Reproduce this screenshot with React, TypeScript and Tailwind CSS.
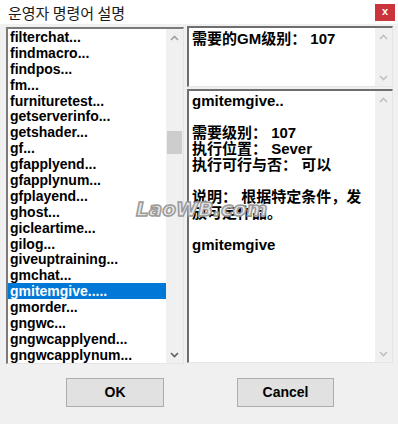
import React from "react";

const items = [
  "filterchat...",
  "findmacro...",
  "findpos...",
  "fm...",
  "furnituretest...",
  "getserverinfo...",
  "getshader...",
  "gf...",
  "gfapplyend...",
  "gfapplynum...",
  "gfplayend...",
  "ghost...",
  "gicleartime...",
  "gilog...",
  "giveuptraining...",
  "gmchat...",
  "gmitemgive.....",
  "gmorder...",
  "gngwc...",
  "gngwcapplyend...",
  "gngwcapplynum...",
];

const Up = ({ c }: { c: string }) => (
  <svg width="9" height="6" viewBox="0 0 9 6">
    <path d="M1 5 L4.5 1.5 L8 5" fill="none" stroke={c} strokeWidth="1.6" />
  </svg>
);
const Down = ({ c }: { c: string }) => (
  <svg width="9" height="6" viewBox="0 0 9 6">
    <path d="M1 1 L4.5 4.5 L8 1" fill="none" stroke={c} strokeWidth="1.6" />
  </svg>
);

const font = { fontFamily: '"Liberation Sans", "Noto Sans CJK SC", sans-serif' };

export default function App() {
  return (
    <div
      className="relative w-[398px] h-[424px] bg-[#f0f0f0] overflow-hidden text-black"
      style={font}
    >
      {/* Title bar */}
      <div className="h-[24px] bg-white flex items-center justify-between pl-[8px] pr-[3px]">
        <span
          className="text-[15px] text-[#1a1a1a] leading-none"
          style={{ fontFamily: '"Noto Sans CJK KR", sans-serif' }}
        >
          운영자 명령어 설명
        </span>
        <div className="w-[20px] h-[17px] bg-[#c9353a] flex items-center justify-center text-white text-[11px] font-bold leading-none pb-[2px]">
          x
        </div>
      </div>

      {/* Body */}
      <div className="flex flex-row pl-[6px] pt-[2px]">
        {/* List box */}
        <div className="mt-[1px] w-[178px] h-[337px] border-l-2 border-t-2 border-[#7a7a7a] border-r border-b border-r-[#e5e5e5] border-b-[#e5e5e5] bg-white flex flex-row">
          <div className="flex-1 flex flex-col overflow-hidden">
            {items.map((it, i) => (
              <div
                key={i}
                className={
                  "h-[15.9px] leading-[16px] pl-[2px] text-[14px] font-bold whitespace-nowrap shrink-0 " +
                  (it === "gmitemgive....." ? "bg-[#0078d7] text-white" : "text-black")
                }
              >
                {it}
              </div>
            ))}
          </div>
          <div className="w-[17px] bg-[#f0f0f0] flex flex-col items-center">
            <div className="h-[17px] flex items-center justify-center">
              <Up c="#a0a0a0" />
            </div>
            <div className="mt-[85px] w-[15px] h-[23px] bg-[#cdcdcd]" />
            <div className="flex-1" />
            <div className="h-[17px] flex items-center justify-center">
              <Down c="#606060" />
            </div>
          </div>
        </div>

        {/* Right column */}
        <div className="ml-[3px] w-[206px] flex flex-col gap-[2px]">
          <div className="h-[61px] border-l-2 border-t-2 border-[#6e6e6e] border-r border-b border-r-[#e5e5e5] border-b-[#e5e5e5] bg-white flex flex-row">
            <div className="flex-1 pl-[3px] pt-[3px] text-[15px] font-bold leading-[16px] whitespace-nowrap">
              需要的GM级别： 107
            </div>
            <div className="w-[17px] bg-[#f0f0f0] flex flex-col items-center justify-between">
              <div className="h-[17px] flex items-center justify-center">
                <Up c="#c0c0c0" />
              </div>
              <div className="h-[17px] flex items-center justify-center">
                <Down c="#c0c0c0" />
              </div>
            </div>
          </div>
          <div className="h-[274px] border-l-2 border-t-2 border-[#6e6e6e] border-r border-b border-r-[#e5e5e5] border-b-[#e5e5e5] bg-white flex flex-row">
            <div className="flex-1 pl-[3px] pt-[2px] text-[15px] font-bold leading-[16px] whitespace-nowrap flex flex-col">
              <div className="h-[16px]">gmitemgive..</div>
              <div className="h-[16px]" />
              <div className="h-[16px]">需要级别： 107</div>
              <div className="h-[16px]">执行位置： Sever</div>
              <div className="h-[16px]">执行可行与否： 可以</div>
              <div className="h-[16px]" />
              <div className="h-[16px]">说明： 根据特定条件，发</div>
              <div className="h-[16px]">放可定作品。</div>
              <div className="h-[16px]" />
              <div className="h-[16px]">gmitemgive</div>
            </div>
            <div className="w-[17px] bg-[#f0f0f0] flex flex-col items-center justify-between">
              <div className="h-[17px] flex items-center justify-center">
                <Up c="#c0c0c0" />
              </div>
              <div className="h-[17px] flex items-center justify-center">
                <Down c="#c0c0c0" />
              </div>
            </div>
          </div>
        </div>
      </div>

      {/* Buttons */}
      <div className="flex flex-row pl-[66px] gap-[73px] mt-[14px]">
        <div className="w-[98px] h-[29px] bg-[#e1e1e1] border border-[#adadad] flex items-center justify-center text-[14px] font-bold">
          OK
        </div>
        <div className="w-[97px] h-[29px] bg-[#e1e1e1] border border-[#adadad] flex items-center justify-center text-[14px] font-bold">
          Cancel
        </div>
      </div>

      {/* Watermark */}
      <div
        className="absolute left-[136px] top-[199px] text-[20px] font-black italic text-[#e6e6e6] pointer-events-none leading-none"
        style={{
          fontFamily: '"DejaVu Sans", sans-serif',
          WebkitTextStroke: "1.5px #9a9a9a",
        }}
      >
        LaoWB.com
      </div>
    </div>
  );
}
